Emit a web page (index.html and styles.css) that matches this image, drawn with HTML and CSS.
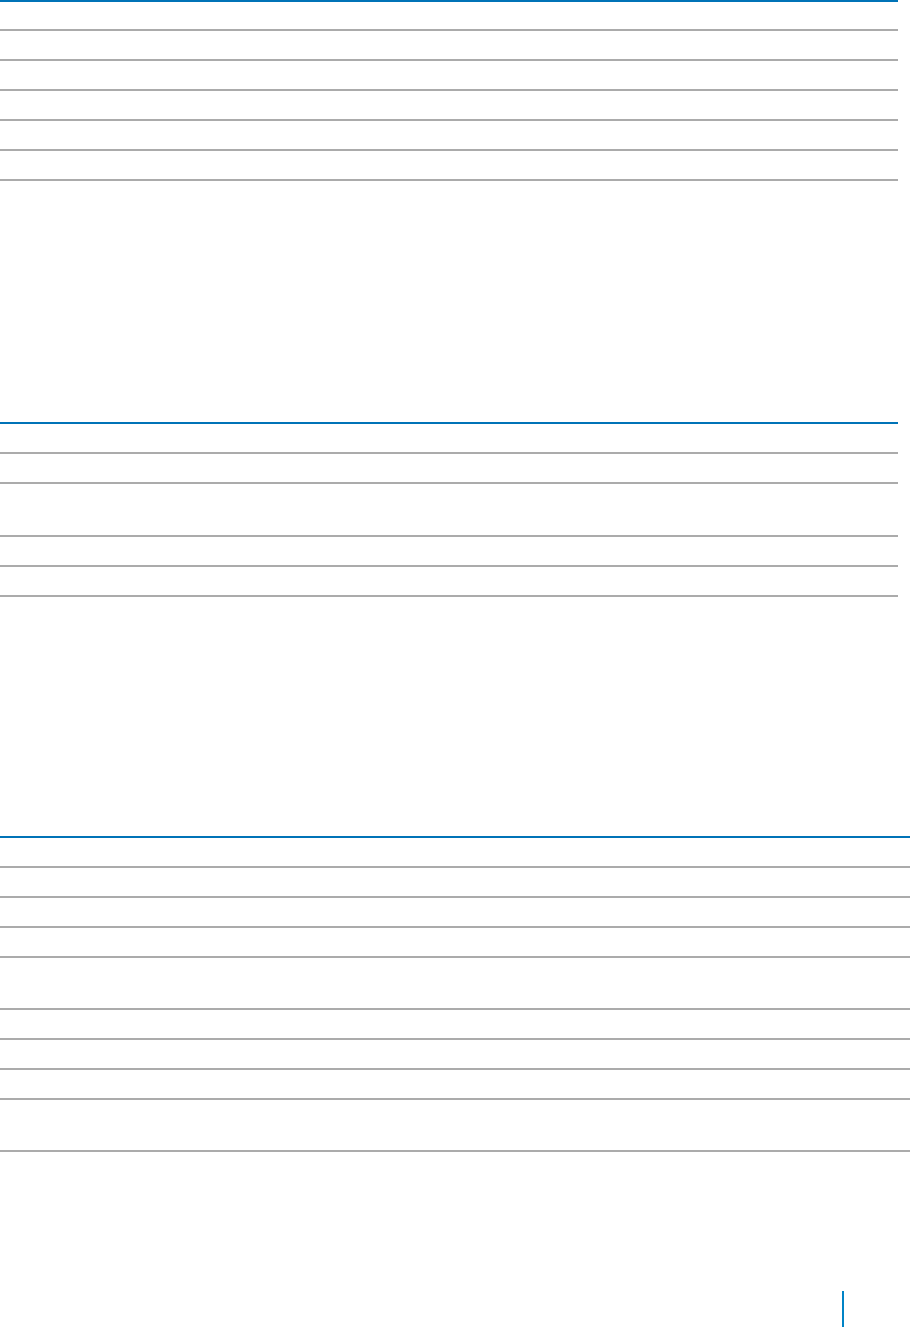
FILE: index.html
```html
<!DOCTYPE html>
<html lang="en">
<head>
<meta charset="utf-8">
<title>Tables</title>
<link rel="stylesheet" href="styles.css">
</head>
<body>
<div class="page">
  <div class="table t-narrow first">
    <div class="row lead"></div>
    <div class="row"></div>
    <div class="row"></div>
    <div class="row"></div>
    <div class="row"></div>
    <div class="row"></div>
  </div>

  <div class="table t-narrow second">
    <div class="row"></div>
    <div class="row"></div>
    <div class="row tall"></div>
    <div class="row"></div>
    <div class="row"></div>
  </div>

  <div class="table t-wide third">
    <div class="row"></div>
    <div class="row"></div>
    <div class="row"></div>
    <div class="row"></div>
    <div class="row tall2"></div>
    <div class="row"></div>
    <div class="row"></div>
    <div class="row"></div>
    <div class="row tall2"></div>
  </div>

  <div class="footer">
    <span class="page-mark"></span>
  </div>
</div>
</body>
</html>
```

FILE: styles.css
```css
html, body {
  margin: 0;
  padding: 0;
  background: #ffffff;
  font-family: "Liberation Sans", Arial, sans-serif;
}

.page {
  display: flex;
  flex-direction: column;
  width: 910px;
  height: 1327px;
  overflow: hidden;
}

.table {
  display: flex;
  flex-direction: column;
  border-top: 2px solid #0073b7;
}

.t-narrow { width: 898px; }
.t-wide { width: 910px; }

.second { margin-top: 241px; }
.third { margin-top: 239px; }

.row {
  height: 28px;
  border-bottom: 2px solid #ababab;
}

.row.lead { height: 27px; }
.row.tall { height: 51px; }
.row.tall2 { height: 50px; }

.footer {
  display: flex;
  margin-top: 139px;
  padding-left: 842px;
}

.page-mark {
  display: block;
  width: 2px;
  height: 36px;
  background: #0083c6;
}
```
